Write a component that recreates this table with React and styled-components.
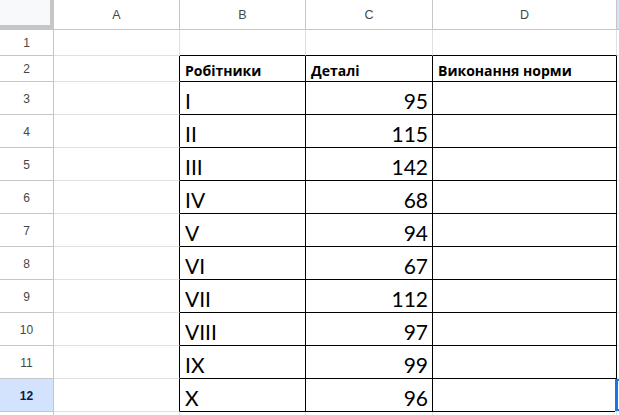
import React from "react";
import styled, { createGlobalStyle, css } from "styled-components";

const GlobalStyle = createGlobalStyle`
  html, body {
    margin: 0;
    padding: 0;
    background: #fff;
    overflow: hidden;
  }
  * { box-sizing: border-box; }
`;

const columns = ["A", "B", "C", "D", "E"];

const rows = [
  ["I", 95],
  ["II", 115],
  ["III", 142],
  ["IV", 68],
  ["V", 94],
  ["VI", 67],
  ["VII", 112],
  ["VIII", 97],
  ["IX", 99],
  ["X", 96],
];

const Sheet = styled.div`
  display: grid;
  grid-template-columns: 54px 126px 126px 127px 184px 1fr;
  grid-template-rows: 30px 26px 26px repeat(10, 33px) 1fr;
  width: 619px;
  height: 415px;
  background: #fff;
  font-family: "Liberation Sans", Arial, sans-serif;
`;

const Corner = styled.div`
  background: #f8f9fa;
  border-right: 4px solid #c4c7c5;
  border-bottom: 5px solid #c4c7c5;
`;

const ColHead = styled.div`
  display: flex;
  align-items: center;
  justify-content: center;
  padding-top: 1px;
  font-size: 12.5px;
  color: #444746;
  overflow: hidden;
  background: ${(p) => (p.$active ? "#d3e3fd" : "#fff")};
  border-right: 1px solid #c4c7c5;
  border-bottom: 1px solid #c4c7c5;
`;

const RowHead = styled.div`
  display: flex;
  align-items: center;
  justify-content: center;
  font-size: 12px;
  padding-top: 1px;
  color: ${(p) => (p.$active ? "#041e49" : "#444746")};
  font-weight: ${(p) => (p.$active ? 700 : 400)};
  background: ${(p) => (p.$active ? "#d3e3fd" : "#fff")};
  border-right: 1px solid #c4c7c5;
  border-bottom: 1px solid #c4c7c5;
`;

const Cell = styled.div`
  display: flex;
  align-items: flex-end;
  justify-content: ${(p) => (p.$right ? "flex-end" : "flex-start")};
  padding: 0 4px 3px 5px;
  font-family: Lato, "Open Sans", sans-serif;
  font-size: 21px;
  line-height: 1;
  color: #000;
  overflow: hidden;
  white-space: nowrap;
  border-right: 1px solid ${(p) => (p.$edgeRight ? "#000" : "#e1e1e1")};
  border-bottom: 1px solid ${(p) => (p.$edgeBottom ? "#000" : "#e1e1e1")};
  ${(p) =>
    p.$head &&
    css`
      font-family: "Open Sans", Arial, sans-serif;
      font-weight: 700;
      font-size: 14px;
      padding-bottom: 3px;
    `}
  ${(p) =>
    p.$selected &&
    css`
      position: relative;
      margin-left: -2px;
      box-shadow: inset 3px 0 0 #1a73e8, inset 0 2px 0 #1a73e8,
        inset 0 -2px 0 #1a73e8;
    `}
`;

const inTable = (ci) => ci >= 1 && ci <= 3;

export default function App() {
  const sheetRows = [
    [null, null, null, null, null],
    [null, "Робітники", "Деталі", "Виконання норми", null],
    ...rows.map(([w, d]) => [null, w, d, null, null]),
  ];

  return (
    <>
      <GlobalStyle />
      <Sheet>
        <Corner />
        {columns.map((c) => (
          <ColHead key={c} $active={c === "E"}>
            {c === "E" ? null : c}
          </ColHead>
        ))}
        {sheetRows.map((cells, ri) => {
          const rowNum = ri + 1;
          return (
            <React.Fragment key={rowNum}>
              <RowHead $active={rowNum === 12}>{rowNum}</RowHead>
              {cells.map((value, ci) => {
                const tableRow = rowNum >= 2;
                return (
                  <Cell
                    key={ci}
                    $head={rowNum === 2}
                    $right={ci === 2 && rowNum > 2}
                    $edgeRight={tableRow && ci <= 3}
                    $edgeBottom={(rowNum === 1 && inTable(ci)) || (tableRow && inTable(ci))}
                    $selected={rowNum === 12 && ci === 4}
                  >
                    {value}
                  </Cell>
                );
              })}
            </React.Fragment>
          );
        })}
        <RowHead />
        {columns.map((c) => (
          <Cell key={c} />
        ))}
      </Sheet>
    </>
  );
}
